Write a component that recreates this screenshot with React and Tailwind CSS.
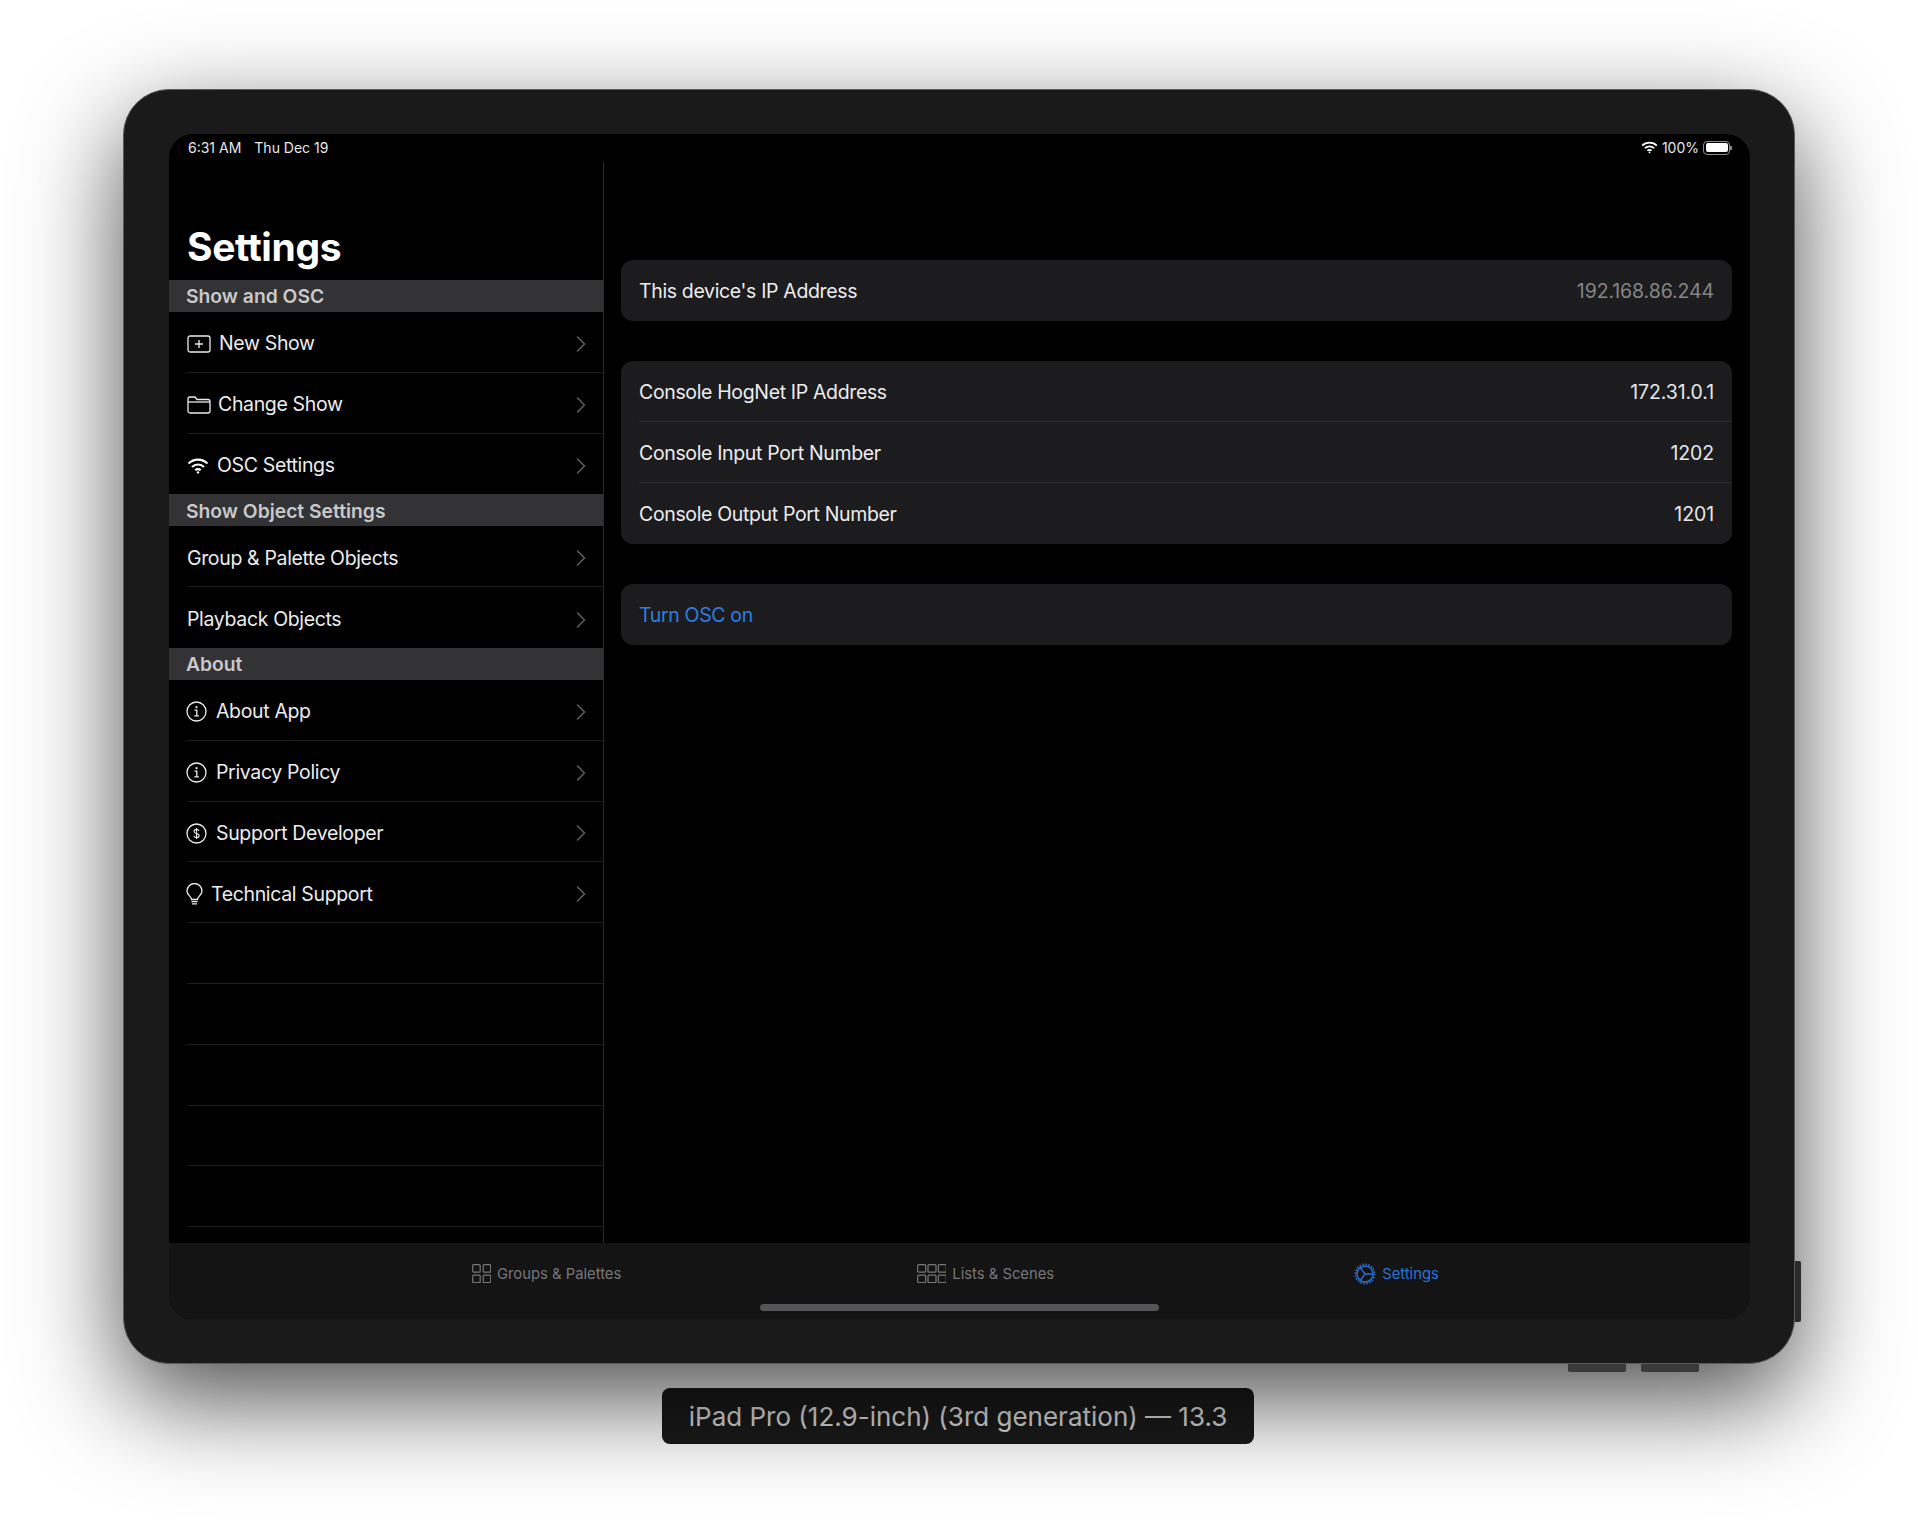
import { ChevronRight } from 'lucide-react';

function PlusBox() {
  return (
    <svg width="24" height="18" viewBox="0 0 24 18" fill="none" stroke="currentColor" strokeWidth="1.3" className="shrink-0 mr-[8px]">
      <rect x="1" y="1" width="22" height="16" rx="2" />
      <path d="M12 5v8M8 9h8" />
    </svg>
  );
}

function FolderIcon() {
  return (
    <svg width="24" height="18" viewBox="0 0 24 18" fill="none" stroke="currentColor" strokeWidth="1.3" className="shrink-0 mr-[7px]">
      <path d="M1 15V3a2 2 0 0 1 2-2h5l2 2.500h11a2 2 0 0 1 2 2V15a2 2 0 0 1-2 2H3a2 2 0 0 1-2-2z" />
      <path d="M1 6h22" />
    </svg>
  );
}

function WifiIcon({ w = 22, h = 16, className = '' }) {
  return (
    <svg width={w} height={h} viewBox="0 0 22 16" fill="none" stroke="currentColor" strokeWidth="2.200" className={className}>
      <path d="M1.500 5.500a13.500 13.500 0 0 1 19 0" />
      <path d="M5 9a8.500 8.500 0 0 1 12 0" />
      <path d="M8.300 12.200a3.800 3.800 0 0 1 5.400 0" />
      <circle cx="11" cy="14.400" r="1.200" fill="currentColor" stroke="none" />
    </svg>
  );
}

function InfoIcon() {
  return (
    <svg width="21" height="21" viewBox="0 0 21 21" fill="none" stroke="currentColor" strokeWidth="1.300" className="shrink-0 -ml-[1px] mr-[9px]">
      <circle cx="10.500" cy="10.500" r="9.500" />
      <path d="M8.500 9.200h2.300v5.600M8.300 14.900h4.600" />
      <circle cx="10.500" cy="6.200" r="1.100" fill="currentColor" stroke="none" />
    </svg>
  );
}

function DollarIcon() {
  return (
    <svg width="21" height="21" viewBox="0 0 21 21" fill="none" stroke="currentColor" strokeWidth="1.300" className="shrink-0 -ml-[1px] mr-[9px]">
      <circle cx="10.500" cy="10.500" r="9.500" />
      <path d="M13 7.800c-.5-1-1.400-1.400-2.500-1.400-1.400 0-2.500.7-2.500 2 0 2.800 5.200 1.400 5.200 4.200 0 1.300-1.200 2-2.700 2-1.200 0-2.200-.5-2.700-1.500M10.500 5v11" strokeWidth="1.100" />
    </svg>
  );
}

function BulbIcon() {
  return (
    <svg width="17" height="23" viewBox="0 0 17 23" fill="none" stroke="currentColor" strokeWidth="1.300" className="shrink-0 -ml-[1px] mr-[8px]">
      <path d="M5.500 16.500c0-3-4.500-4.500-4.500-8.500a7.500 7.500 0 0 1 15 0c0 4-4.500 5.500-4.500 8.500z" />
      <path d="M5.500 18.700h6M6 20.800h5" />
    </svg>
  );
}

function GridIcon({ cols }) {
  const cells = [];
  const w = cols === 3 ? 8 : 7.500;
  const step = cols === 3 ? 10.300 : 10.500;
  for (let r = 0; r < 2; r++) {
    for (let c = 0; c < cols; c++) {
      cells.push(<rect key={`${r}-${c}`} x={0.7 + c * step} y={0.7 + r * 10.500} width={w} height="7.500" rx="1" />);
    }
  }
  return (
    <svg width={cols === 3 ? 29 : 19} height="19" viewBox={`0 0 ${cols === 3 ? 29 : 19} 19`} fill="none" stroke="currentColor" strokeWidth="1.200" className="shrink-0">
      {cells}
    </svg>
  );
}

function GearIcon() {
  return (
    <svg width="22" height="22" viewBox="0 0 22 22" fill="none" stroke="currentColor" className="shrink-0 -mr-[1px]">
      <circle cx="11" cy="11" r="8" strokeWidth="1.500" />
      <circle cx="11" cy="11" r="9.700" strokeWidth="1.700" strokeDasharray="1.500 1.550" />
      <path d="M8.800 8.200 11.200 11 8.800 13.800M11.200 11H18.500M8.800 8.200 6.200 4.600M8.800 13.800l-2.600 3.600" strokeWidth="1.400" />
    </svg>
  );
}

function SectionHeader({ title }) {
  return (
    <div className="h-[32px] pt-[2px] bg-[#333335] flex items-center pl-[17px] text-[19.300px] font-semibold text-[#c9c9cb] leading-none">
      {title}
    </div>
  );
}

function MenuRow({ icon, label, last, empty }) {
  return (
    <div className={`ml-[18px] h-[60.800px] pt-[4px] flex items-center pr-[6px] text-[19.500px] tracking-[-0.35px] text-[#ececee] ${last ? '' : 'border-b border-[#1f1f20]'}`}>
      {icon}
      <span className="flex-1">{label}</span>
      {!empty && <ChevronRight size={28} strokeWidth={1.400} className="text-[#5c5c5e] -ml-[2px] mr-[2px]" />}
    </div>
  );
}

function InfoRow({ label, value, valueClass = 'text-[#e6e6e8]', last }) {
  return (
    <div className={`ml-[18px] h-[60.800px] pt-[2.500px] flex items-center justify-between pr-[18px] ${last ? '' : 'border-b border-[#2e2e30]'}`}>
      <span className="text-[#ececee]">{label}</span>
      <span className={`tracking-[-0.1px] ${valueClass}`}>{value}</span>
    </div>
  );
}

export default function App() {
  return (
    <div className="w-[1918px] h-[1526px] bg-white overflow-hidden pt-[89px] font-['Inter','Liberation_Sans',sans-serif]">
      <div className="relative w-[1672px] h-[1275px] mx-auto bg-[#1a1a1a] rounded-[46px] pt-[44px] pl-[45px] pr-[44px] border border-[#5a5a5a] shadow-[0_35px_100px_rgba(0,0,0,0.7)]">
        <div className="absolute -right-[7px] top-[1171px] w-[6px] h-[61px] bg-[#2a2a2a] rounded-r-[2px]" />
        <div className="absolute left-[1444px] -bottom-[9px] w-[58px] h-[8px] bg-[#3a3a3a] rounded-b-[2px]" />
        <div className="absolute left-[1517px] -bottom-[9px] w-[58px] h-[8px] bg-[#3a3a3a] rounded-b-[2px]" />

        <div className="h-[1185px] bg-black rounded-[24px] overflow-hidden flex flex-col">
          <div className="h-[28px] pb-[1px] shrink-0 flex items-center justify-between pl-[19px] pr-[18px] text-[14px] text-[#e8e8e8]">
            <div className="flex gap-[13px]">
              <span>6:31 AM</span>
              <span>Thu Dec 19</span>
            </div>
            <div className="flex items-center">
              <WifiIcon w={17} h={13} className="text-white mr-[4px]" />
              <span>100%</span>
              <div className="ml-[4px] w-[27px] h-[14px] border border-[#8a8a8a] rounded-[4px] p-[1.500px]">
                <div className="w-full h-full bg-white rounded-[2px]" />
              </div>
              <div className="w-[2px] h-[4px] bg-[#8a8a8a] rounded-r-[1px]" />
            </div>
          </div>

          <div className="flex-1 flex min-h-0">
            <div className="w-[435px] shrink-0 border-r border-[#2a2a2b] overflow-hidden">
              <div className="h-[118px] flex items-end pl-[18px] pb-[9px] text-[39px] leading-[48px] tracking-[-0.4px] font-bold text-white">
                Settings
              </div>
              <SectionHeader title="Show and OSC" />
              <MenuRow icon={<PlusBox />} label="New Show" />
              <MenuRow icon={<FolderIcon />} label="Change Show" />
              <MenuRow icon={<WifiIcon className="shrink-0 mr-[8px] text-white" />} label="OSC Settings" last />
              <SectionHeader title="Show Object Settings" />
              <MenuRow label="Group & Palette Objects" />
              <MenuRow label="Playback Objects" last />
              <SectionHeader title="About" />
              <MenuRow icon={<InfoIcon />} label="About App" />
              <MenuRow icon={<InfoIcon />} label="Privacy Policy" />
              <MenuRow icon={<DollarIcon />} label="Support Developer" />
              <MenuRow icon={<BulbIcon />} label="Technical Support" />
              <MenuRow empty />
              <MenuRow empty />
              <MenuRow empty />
              <MenuRow empty />
              <MenuRow empty />
            </div>

            <div className="flex-1 pl-[17px] pr-[18px] pt-[98px] text-[19.500px] tracking-[-0.35px]">
              <div className="bg-[#1c1c1e] rounded-[12px] overflow-hidden">
                <InfoRow label="This device's IP Address" value="192.168.86.244" valueClass="text-[#858587]" last />
              </div>
              <div className="mt-[40.500px] bg-[#1c1c1e] rounded-[12px] overflow-hidden">
                <InfoRow label="Console HogNet IP Address" value="172.31.0.1" />
                <InfoRow label="Console Input Port Number" value="1202" />
                <InfoRow label="Console Output Port Number" value="1201" last />
              </div>
              <div className="mt-[40.500px] bg-[#1c1c1e] rounded-[12px] h-[60.800px] pt-[2.500px] flex items-center pl-[18px] text-[#2f7de1]">
                Turn OSC on
              </div>
            </div>
          </div>

          <div className="h-[76px] shrink-0 bg-[#141414]">
            <div className="h-[61px] flex items-center pl-[303px] text-[14.800px] text-[#777779]">
              <div className="flex items-center gap-[6px] mr-[296px]">
                <GridIcon cols={2} />
                <span className="pt-[2px]">Groups & Palettes</span>
              </div>
              <div className="flex items-center gap-[6px] mr-[300px]">
                <GridIcon cols={3} />
                <span className="pt-[2px]">Lists & Scenes</span>
              </div>
              <div className="flex items-center gap-[7px] text-[#2a73d9]">
                <GearIcon />
                <span className="pt-[2px]">Settings</span>
              </div>
            </div>
            <div className="w-[399px] h-[7px] mx-auto bg-[#555557] rounded-full" />
          </div>
        </div>
      </div>

      <div className="w-[592px] h-[56px] ml-[662px] mt-[24px] bg-[#1a1a1a] rounded-[8px] shadow-[0_-1px_0_rgba(255,255,255,0.3)] flex items-center justify-center text-[26px] text-[#e0e0e0]">
        iPad Pro (12.9-inch) (3rd generation) — 13.3
      </div>
    </div>
  );
}
